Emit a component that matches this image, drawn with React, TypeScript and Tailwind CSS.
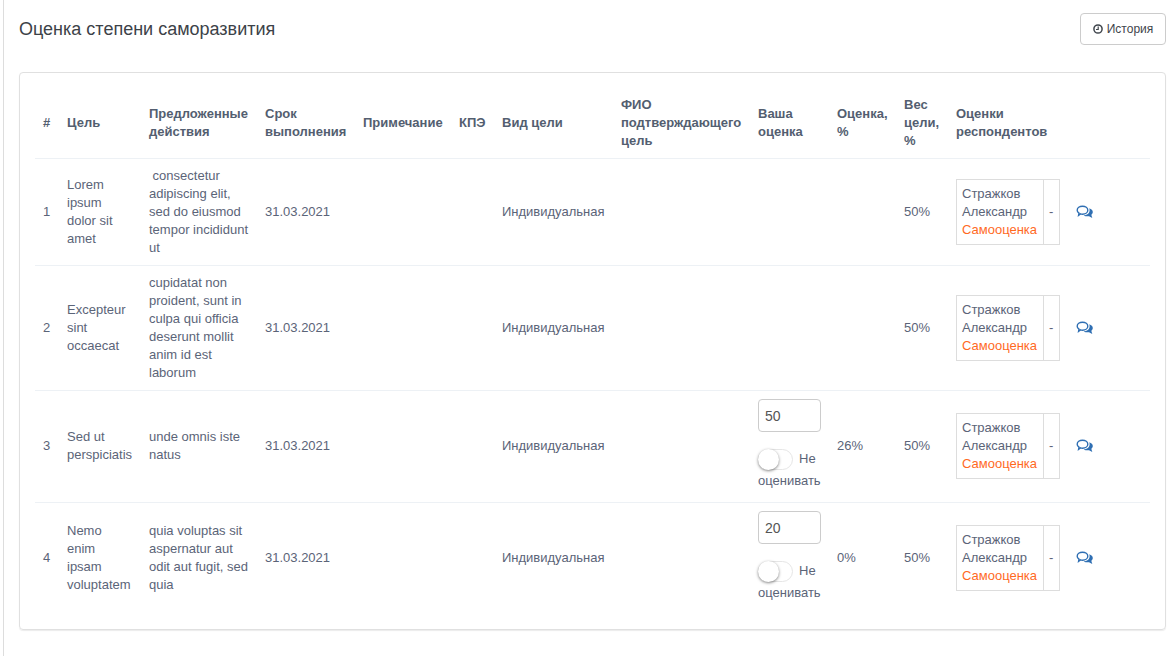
interface Goal {
  id: number;
  name: string;
  actions: string;
  score?: string;
  percent?: string;
}

const goals: Goal[] = [
  {
    id: 1,
    name: "Lorem ipsum dolor sit amet",
    actions: "\u00a0consectetur adipiscing elit, sed do eiusmod tempor incididunt ut",
  },
  {
    id: 2,
    name: "Excepteur sint occaecat",
    actions: "cupidatat non proident, sunt in culpa qui officia deserunt mollit anim id est laborum",
  },
  {
    id: 3,
    name: "Sed ut perspiciatis",
    actions: "unde omnis iste natus",
    score: "50",
    percent: "26%",
  },
  {
    id: 4,
    name: "Nemo enim ipsam voluptatem",
    actions: "quia voluptas sit aspernatur aut odit aut fugit, sed quia",
    score: "20",
    percent: "0%",
  },
];

const headers = [
  "#",
  "Цель",
  "Предложенные действия",
  "Срок выполнения",
  "Примечание",
  "КПЭ",
  "Вид цели",
  "ФИО подтверждающего цель",
  "Ваша оценка",
  "Оценка, %",
  "Вес цели, %",
  "Оценки респондентов",
  "",
];

const widths = [25, 82, 116, 98, 96, 43, 119, 137, 79, 67, 52, 120, 81];

function ClockIcon() {
  return (
    <svg viewBox="0 0 10 10" className="w-[10px] h-[10px]" fill="none" stroke="currentColor">
      <circle cx="5" cy="5" r="4.1" strokeWidth="1.5" />
      <path d="M5.2 2.4V5.5H3" strokeWidth="1.2" />
    </svg>
  );
}

function CommentsIcon() {
  return (
    <svg viewBox="0 0 17 14" className="block w-[17px] h-[14px] text-[#2f6fb3]">
      <path
        d="M6.5 1.2C9.5 1.2 11.8 3 11.8 5.2S9.5 9.2 6.5 9.2C5.8 9.2 5.1 9.1 4.5 8.9L2.6 10.3 3 8.2C1.9 7.5 1.2 6.4 1.2 5.2 1.2 3 3.5 1.2 6.5 1.2Z"
        fill="none"
        stroke="currentColor"
        strokeWidth="1.4"
      />
      <path
        d="M13.2 3.2C15.4 3.9 16.8 5.3 16.8 7 16.8 8.1 16.2 9.1 15.3 9.8L16.3 13 13 11.3C11.6 11.5 9.2 11.3 7.6 10.4 10.8 10.4 13.8 8.2 13.6 5.2 13.6 4.5 13.5 3.8 13.2 3.2Z"
        fill="currentColor"
      />
    </svg>
  );
}

export default function App() {
  return (
    <div className="h-[656px] overflow-hidden ml-[3px] border-l border-[#dddddd] pl-[15px] pr-[9px] bg-white font-['Liberation_Sans',Arial,sans-serif] text-[13px] leading-[18px] text-[#5b6478]">
      {/* заголовок */}
      <div className="flex justify-between items-start h-[72px] pt-[13px]">
        <h2 className="text-[18px] leading-[32px] font-normal text-[#3c4248]">
          Оценка степени саморазвития
        </h2>
        <button className="flex items-center justify-center gap-[4px] w-[86px] h-[32px] border border-[#cccccc] rounded-[4px] text-[12px] text-[#3f454c] bg-white">
          <ClockIcon />
          История
        </button>
      </div>

      <div className="border border-[#e0e0e0] rounded-[4px] pl-[15px] pr-[16px] py-[15px] shadow-[0_1px_1px_rgba(0,0,0,0.08)]">
        <table className="table-fixed border-collapse w-[1115px]">
          <colgroup>
            {widths.map((w, i) => (
              <col key={i} style={{ width: w }} />
            ))}
          </colgroup>
          <thead>
            <tr className="border-b border-[#edf1f5]">
              {headers.map((h, i) => (
                <th
                  key={i}
                  className={`px-[7px] py-[8px] text-left font-bold align-middle text-[#535e70] ${i === 0 ? "pl-[8px]" : ""}`}
                >
                  {h}
                </th>
              ))}
            </tr>
          </thead>
          <tbody>
            {goals.map((g, i) => {
              // строки с полем ввода: остальной текст чуть выше центра
              const pad = g.score ? "pt-[8px] pb-[10px]" : "py-[8px]";
              return (
                <tr key={g.id} className={i < goals.length - 1 ? "border-b border-[#edf1f5]" : ""}>
                  <td className={`pl-[8px] pr-[7px] ${pad}`}>{g.id}</td>
                  <td className={`pl-[7px] pr-[10px] ${pad}`}>{g.name}</td>
                  <td className={`px-[7px] ${pad}`}>{g.actions}</td>
                  <td className={`px-[7px] ${pad}`}>31.03.2021</td>
                  <td className={`px-[7px] ${pad}`}></td>
                  <td className={`px-[7px] ${pad}`}></td>
                  <td className={`px-[7px] ${pad}`}>Индивидуальная</td>
                  <td className={`px-[7px] ${pad}`}></td>
                  <td className="px-[7px] py-[8px]">
                    {g.score && (
                      <div className="pb-[2px]">
                        <input
                          readOnly
                          value={g.score}
                          className="block w-[63px] h-[33px] border border-[#cccccc] rounded-[4px] px-[6px] text-[14px] text-[#555555] outline-none"
                        />
                        <div className="mt-[16px] leading-[22px]">
                          <span className="inline-block align-middle relative w-[35px] h-[21px] mr-[6px] rounded-full border border-[#e6e6e6] bg-white">
                            <span className="absolute left-[-1px] top-[-1px] w-[21px] h-[21px] rounded-full bg-white shadow-[0_1px_3px_rgba(0,0,0,0.5)]" />
                          </span>
                          Не оценивать
                        </div>
                      </div>
                    )}
                  </td>
                  <td className={`px-[7px] ${pad}`}>{g.percent}</td>
                  <td className={`px-[7px] ${pad}`}>50%</td>
                  <td className={`px-[7px] ${pad}`}>
                    <div className="flex items-stretch w-[104px] border border-[#dddddd]">
                      <div className="w-[87px] shrink-0 px-[5px] py-[5px] border-r border-[#dddddd]">
                        Стражков Александр
                        <div className="text-[#ff6a1f]">Самооценка</div>
                      </div>
                      <div className="flex items-center px-[5px]">-</div>
                    </div>
                  </td>
                  <td className={`px-[7px] ${pad}`}>
                    <CommentsIcon />
                  </td>
                </tr>
              );
            })}
          </tbody>
        </table>
      </div>
    </div>
  );
}
